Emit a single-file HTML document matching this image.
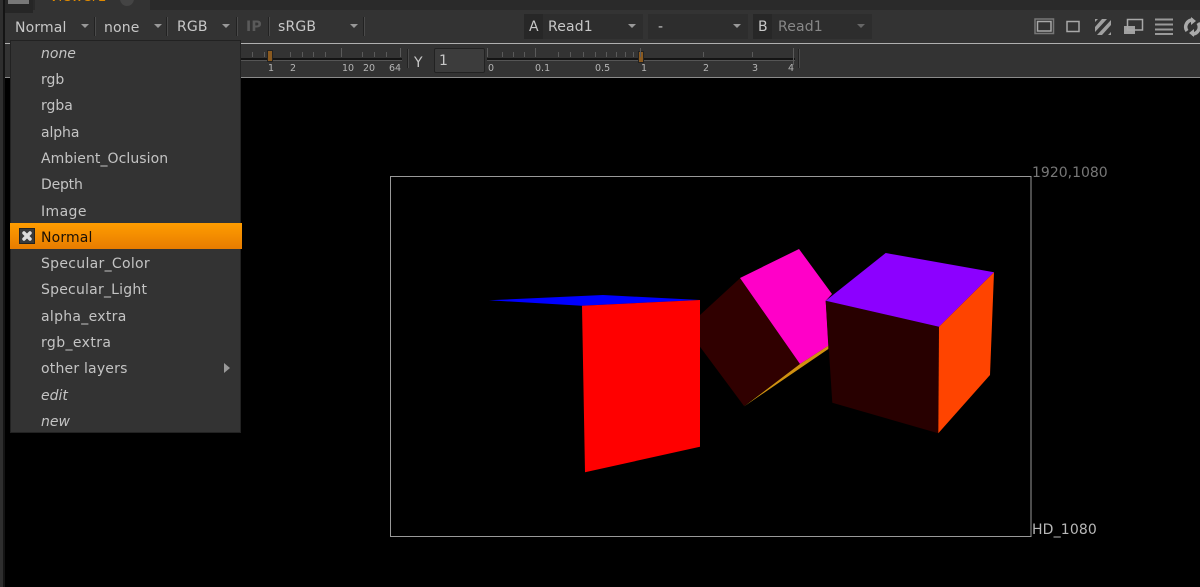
<!DOCTYPE html>
<html><head><meta charset="utf-8">
<style>
html,body{margin:0;padding:0;background:#000}
#p{position:relative;width:1200px;height:587px;overflow:hidden;background:#000;font-family:"DejaVu Sans","Liberation Sans",sans-serif;font-size:14px;color:#c8c8c8}
#p div{position:absolute;box-sizing:border-box}
.t{white-space:pre;line-height:18px;letter-spacing:.15px}
.a{width:0;height:0;border-left:4px solid transparent;border-right:4px solid transparent;border-top:4px solid #999}
.s{width:2px;background:#222;border-right:1px solid #4a4a4a}
.m{left:41px;white-space:pre;line-height:18px;color:#c4c4c4;font-size:14px}
.n{font-size:9.5px;line-height:11px;color:#b5b5b5;white-space:pre}
.tk{width:1px;background:#5a5a5a}
</style></head><body><div id="p">
<div style="left:0;top:0;width:1200px;height:10px;background:#2a2a2a"></div>
<div style="left:0;top:10px;width:1200px;height:33px;background:#333"></div>
<div style="left:5px;top:43px;width:1195px;height:1px;background:#b0b0b0"></div>
<div style="left:0;top:44px;width:1200px;height:33px;background:#333"></div>
<div style="left:5px;top:77px;width:1195px;height:1px;background:#8a8a8a"></div>
<div style="left:0;top:0;width:3px;height:587px;background:#2e2e2e"></div>
<div style="left:3px;top:0;width:2px;height:587px;background:#141414"></div>
<div style="left:5px;top:78px;width:1195px;height:509px;background:#000"></div>
<div style="left:5px;top:0;width:28px;height:13px;background:#262626"></div>
<div style="left:8px;top:0;width:21px;height:4px;background:#777"></div>
<div style="left:35px;top:0;width:115px;height:10px;background:#333"></div>
<div class="t" style="left:49px;top:-12px;color:#e08a00;font-size:14px">Viewer1</div>
<div style="left:120px;top:-8px;width:14px;height:14px;border-radius:7px;background:#444"></div>

<div class="t" style="left:15px;top:19px">Normal</div><div class="a" style="left:81px;top:24px"></div><div class="s" style="left:94px;top:17px;height:19px"></div>
<div class="t" style="left:104px;top:19px">none</div><div class="a" style="left:154px;top:24px"></div><div class="s" style="left:166px;top:17px;height:19px"></div>
<div class="t" style="left:177px;top:18px">RGB</div><div class="a" style="left:222px;top:24px"></div><div class="s" style="left:236px;top:17px;height:19px"></div>
<div class="t" style="left:246px;top:18px;color:#5a5a5a;font-weight:bold">IP</div><div class="s" style="left:268px;top:17px;height:19px"></div>
<div class="t" style="left:278px;top:18px">sRGB</div><div class="a" style="left:350px;top:24px"></div><div class="s" style="left:363px;top:17px;height:19px"></div>

<div style="left:524px;top:14px;width:19px;height:25px;background:#272727"></div>
<div style="left:543px;top:14px;width:100px;height:25px;background:#2d2d2d"></div>
<div class="t" style="left:529px;top:18px">A</div><div class="t" style="left:548px;top:18px">Read1</div><div class="a" style="left:628px;top:24px"></div>
<div style="left:648px;top:14px;width:100px;height:25px;background:#2d2d2d"></div>
<div class="t" style="left:658px;top:18px">-</div><div class="a" style="left:733px;top:24px"></div>
<div style="left:753px;top:14px;width:19px;height:25px;background:#272727"></div>
<div style="left:772px;top:14px;width:100px;height:25px;background:#2d2d2d"></div>
<div class="t" style="left:758px;top:18px">B</div><div class="t" style="left:778px;top:18px;color:#888">Read1</div><div class="a" style="left:857px;top:24px;border-top-color:#666"></div>

<svg style="position:absolute;left:1030px;top:14px" width="170" height="26" fill="none" stroke="#a8a8a8">
<rect x="5" y="5" width="18.500" height="14.500" stroke="#777" stroke-width="1.500"/><rect x="7.500" y="7.500" width="13.500" height="9.500" stroke-width="1.500"/>
<rect x="37" y="7.500" width="12" height="10" stroke-width="1.500"/>
<g fill="#a0a0a0" stroke="none"><path d="M65 5h3l-3 3zM65 13l7-8h5l-12 13zM67 21l14-15v5l-9 10zM78 21l3-3v3z"/><rect x="94" y="12" width="11" height="8"/></g>
<rect x="97.500" y="5.500" width="15" height="10.500" stroke-width="1.500"/>
<path d="M125 5.500h18M125 10.500h18M125 15.500h18M125 20h18" stroke="#9a9a9a" stroke-width="2"/>
<path d="M157 17a7 7 0 0 1 6-11M168 9a7 7 0 0 1-6 11" stroke="#aaa" stroke-width="3.500"/>
<path d="M161 3l5 4-5 4zM164 15l-5 4 5 4z" fill="#aaa" stroke="none"/>
</svg>

<!-- sliders -->
<div style="left:241px;top:58px;width:161px;height:2px;background:#141414"></div>
<div style="left:241px;top:60px;width:161px;height:1px;background:#555"></div>
<div style="left:267px;top:50px;width:6px;height:12px;background:#8a5a20;border:1px solid #222"></div>
<div class="tk" style="left:252px;top:52px;height:5px"></div><div class="tk" style="left:264px;top:52px;height:5px"></div><div class="tk" style="left:290px;top:52px;height:5px"></div><div class="tk" style="left:302px;top:52px;height:5px"></div><div class="tk" style="left:313px;top:52px;height:5px"></div><div class="tk" style="left:325px;top:52px;height:5px"></div><div class="tk" style="left:341px;top:48px;height:9px"></div><div class="tk" style="left:362px;top:52px;height:5px"></div><div class="tk" style="left:374px;top:52px;height:5px"></div><div class="tk" style="left:386px;top:52px;height:5px"></div><div class="tk" style="left:400px;top:48px;height:9px"></div>
<div class="n" style="left:268px;top:63px">1</div><div class="n" style="left:290px;top:63px">2</div><div class="n" style="left:342px;top:63px">10</div><div class="n" style="left:363px;top:63px">20</div><div class="n" style="left:389px;top:63px">64</div>
<div class="s" style="left:407px;top:49px;height:19px"></div>
<div class="t" style="left:414px;top:54px">Y</div>
<div style="left:434px;top:48px;width:51px;height:25px;background:#3c3c3c;border:1px solid #222;border-radius:2px"></div>
<div class="t" style="left:439px;top:52px">1</div>

<div style="left:487px;top:58px;width:308px;height:2px;background:#141414"></div>
<div style="left:487px;top:60px;width:308px;height:1px;background:#555"></div>
<div style="left:638px;top:51px;width:6px;height:12px;background:#8a5a20;border:1px solid #222"></div>
<div class="tk" style="left:487px;top:48px;height:9px"></div><div class="tk" style="left:502px;top:52px;height:5px"></div><div class="tk" style="left:513px;top:52px;height:5px"></div><div class="tk" style="left:524px;top:52px;height:5px"></div><div class="tk" style="left:535px;top:48px;height:9px"></div><div class="tk" style="left:558px;top:52px;height:5px"></div><div class="tk" style="left:570px;top:52px;height:5px"></div><div class="tk" style="left:583px;top:52px;height:5px"></div><div class="tk" style="left:595px;top:52px;height:5px"></div><div class="tk" style="left:606px;top:52px;height:5px"></div><div class="tk" style="left:616px;top:52px;height:5px"></div><div class="tk" style="left:625px;top:52px;height:5px"></div><div class="tk" style="left:633px;top:52px;height:5px"></div><div class="tk" style="left:640px;top:48px;height:9px"></div><div class="tk" style="left:703px;top:52px;height:5px"></div><div class="tk" style="left:752px;top:52px;height:5px"></div><div class="tk" style="left:793px;top:48px;height:17px"></div>
<div class="n" style="left:488px;top:63px">0</div><div class="n" style="left:535px;top:63px">0.1</div><div class="n" style="left:595px;top:63px">0.5</div><div class="n" style="left:641px;top:63px">1</div><div class="n" style="left:703px;top:63px">2</div><div class="n" style="left:752px;top:63px">3</div><div class="n" style="left:788px;top:63px">4</div>
<div class="s" style="left:798px;top:49px;height:19px"></div>

<!-- viewer -->
<svg style="position:absolute;left:0;top:0" width="1200" height="587">
<rect x="390.500" y="176.500" width="640.500" height="360" fill="none" stroke="#999"/>
<polygon points="489,300.300 603,295 700,300 581.700,305.700" fill="#0000ff"/>
<polygon points="582,305.700 700,300 700,446.700 585,472.300" fill="#ff0000"/>
<polygon points="740,278.300 800,364 744,406 700,346.700 700,315" fill="#300000"/>
<polygon points="740,278 799,249 832,294 825.700,300.700 828.300,345.700 800,364" fill="#ff00c8"/>
<polygon points="800,364 828.300,345.700 828.300,349 744,406.500" fill="#d09010"/>
<polygon points="825.700,300.700 939,326.700 938.300,433.300 832.300,402.700" fill="#280000"/>
<polygon points="885.700,253 994,272.300 939,326.700 825.700,300.700" fill="#8c00ff"/>
<polygon points="939,326.700 994,272.300 990,375 938.300,433.300" fill="#ff4400"/>
</svg>
<div class="t" style="left:1032px;top:164px;color:#777;letter-spacing:0">1920,1080</div>
<div class="t" style="left:1032px;top:521px;color:#b8b8b8">HD_1080</div>

<!-- menu -->
<div style="left:10px;top:40px;width:231px;height:393px;background:#333;border:1px solid #222"></div>
<div class="m" style="top:45px;font-style:italic">none</div>
<div class="m" style="top:71px">rgb</div>
<div class="m" style="top:97px">rgba</div>
<div class="m" style="top:124px;letter-spacing:-.1px">alpha</div>
<div class="m" style="top:150px;letter-spacing:.07px">Ambient_Oclusion</div>
<div class="m" style="top:176px;letter-spacing:-.2px">Depth</div>
<div class="m" style="top:203px;letter-spacing:.4px">Image</div>
<div style="left:10px;top:223px;width:232px;height:26px;background:linear-gradient(#ff9d00,#e87c00)"></div>
<div style="left:19px;top:228px;width:16px;height:16px;background:#3a3a3a;border:1px solid #222"></div>
<svg style="position:absolute;left:21px;top:230px" width="12" height="12"><path d="M3 3L9 9M9 3L3 9" stroke="#ddd" stroke-width="3.500" stroke-linecap="round"/></svg>
<div class="m" style="top:229px;color:#1c1206;letter-spacing:.15px">Normal</div>
<div class="m" style="top:255px;letter-spacing:.3px">Specular_Color</div>
<div class="m" style="top:281px;letter-spacing:.22px">Specular_Light</div>
<div class="m" style="top:308px;letter-spacing:.3px">alpha_extra</div>
<div class="m" style="top:334px;letter-spacing:.4px">rgb_extra</div>
<div class="m" style="top:360px;letter-spacing:.2px">other layers</div>
<div style="left:224px;top:363px;width:0;height:0;border-top:5px solid transparent;border-bottom:5px solid transparent;border-left:6px solid #999"></div>
<div class="m" style="top:387px;font-style:italic">edit</div>
<div class="m" style="top:413px;font-style:italic">new</div>
</div></body></html>
